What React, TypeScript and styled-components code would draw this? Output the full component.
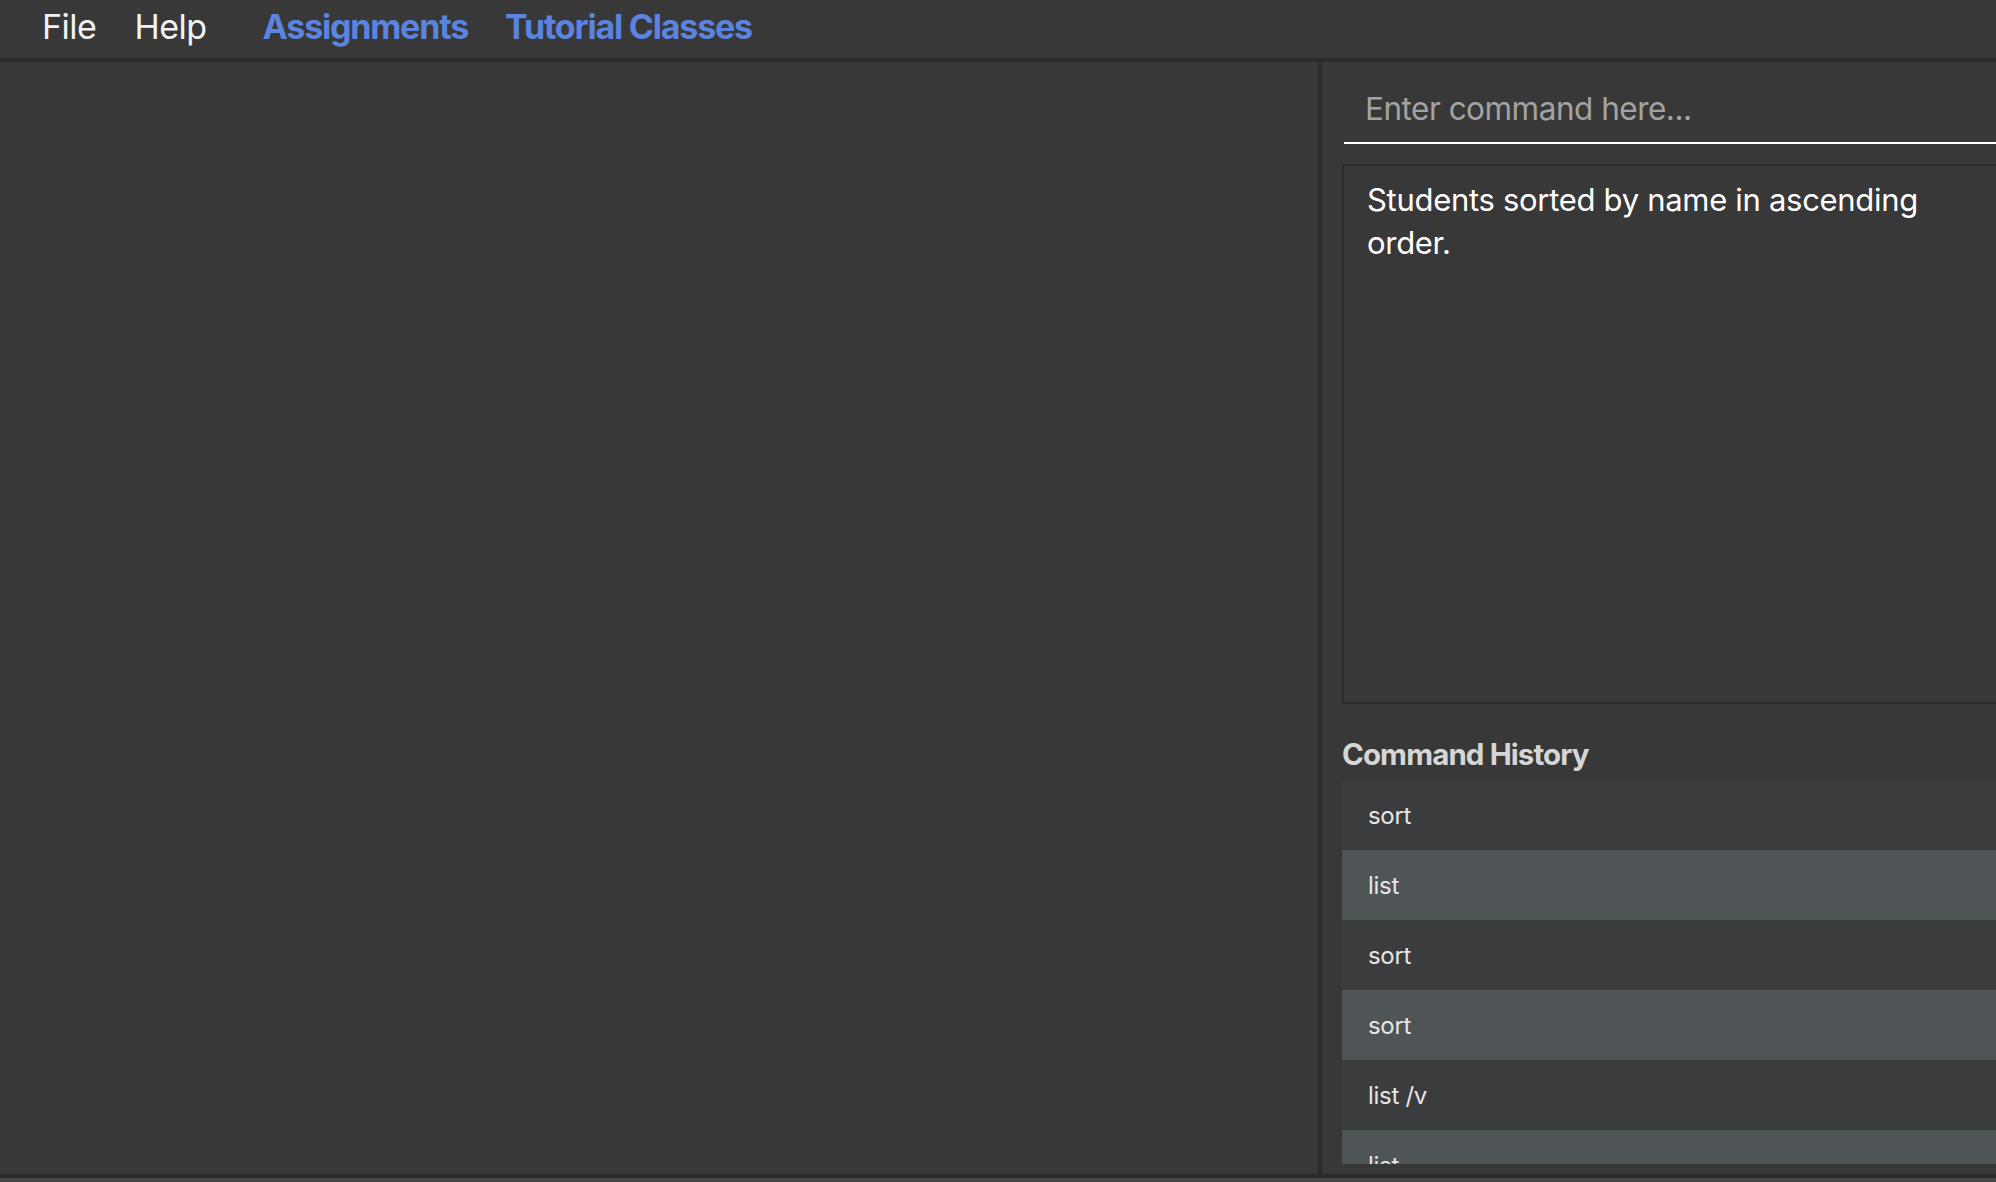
import React from "react";
import styled, { createGlobalStyle } from "styled-components";

const GlobalStyle = createGlobalStyle`
  html, body {
    margin: 0;
    padding: 0;
    background: #383838;
    font-family: Inter, "Noto Sans", "Liberation Sans", sans-serif;
  }
  * { box-sizing: border-box; }
`;

const Window = styled.div`
  width: 1996px;
  height: 1182px;
  display: flex;
  flex-direction: column;
  overflow: hidden;
  background: #383838;
`;

const MenuBar = styled.div`
  height: 62px;
  flex: 0 0 62px;
  display: flex;
  align-items: center;
  padding: 0 0 6px 42px;
  border-bottom: 4px solid #2b2b2b;
  background: #383838;
`;

const MenuItem = styled.span`
  font-size: 34px;
  color: #f2f2f2;
  letter-spacing: -0.5px;
  margin-right: 38px;
  &:nth-of-type(2) { margin-right: 56px; }
`;

const TabLink = styled.span`
  font-size: 34px;
  font-weight: 700;
  color: #5a84df;
  letter-spacing: -1.2px;
  margin-right: 37px;
`;

const Body = styled.div`
  flex: 1;
  display: flex;
  min-height: 0;
`;

const LeftPane = styled.div`
  width: 1318px;
  flex: 0 0 1318px;
  background: #383838;
`;

const Divider = styled.div`
  width: 4px;
  flex: 0 0 4px;
  background: #2b2b2b;
`;

const RightPane = styled.div`
  flex: 0 0 720px;
  display: flex;
  flex-direction: column;
  padding: 16px 0 10px 20px;
  background: #383838;
  min-height: 0;
`;

const CommandInput = styled.div`
  height: 66px;
  margin-left: 2px;
  border-bottom: 2px solid #ffffff;
  display: flex;
  align-items: center;
  padding-left: 21px;
  padding-bottom: 4px;
  font-size: 31.5px;
  color: #a3a3a3;
  letter-spacing: -0.5px;
`;

const ResultBox = styled.div`
  margin-top: 20px;
  height: 540px;
  flex: 0 0 540px;
  border: 2px solid #2b2b2b;
  border-right: none;
  padding: 12px 40px 0 23px;
  font-size: 31px;
  line-height: 43px;
  color: #ffffff;
  letter-spacing: -0.3px;
`;

const HistoryTitle = styled.div`
  margin-top: 24px;
  height: 52px;
  display: flex;
  align-items: center;
  font-size: 29.5px;
  font-weight: 700;
  color: #d6d6d6;
  letter-spacing: -0.9px;
`;

const HistoryList = styled.div`
  flex: 1;
  overflow: hidden;
  display: flex;
  flex-direction: column;
`;

const HistoryRow = styled.div<{ $alt: boolean }>`
  flex: 0 0 70px;
  height: 70px;
  display: flex;
  align-items: center;
  padding-left: 26px;
  background: ${(p) => (p.$alt ? "#4f5457" : "#3b3c3e")};
  font-size: 24px;
  color: #e6e6e6;
  letter-spacing: -0.3px;
`;

const StatusBar = styled.div`
  height: 8px;
  flex: 0 0 8px;
  border-top: 4px solid #2b2b2b;
  background: #444444;
`;

const history = ["sort", "list", "sort", "sort", "list /v", "list"];

export default function App() {
  return (
    <>
      <GlobalStyle />
      <Window>
        <MenuBar>
          <MenuItem>File</MenuItem>
          <MenuItem>Help</MenuItem>
          <TabLink>Assignments</TabLink>
          <TabLink>Tutorial Classes</TabLink>
        </MenuBar>
        <Body>
          <LeftPane />
          <Divider />
          <RightPane>
            <CommandInput>Enter command here...</CommandInput>
            <ResultBox>
              Students sorted by name in ascending
              <br />
              order.
            </ResultBox>
            <HistoryTitle>Command History</HistoryTitle>
            <HistoryList>
              {history.map((h, i) => (
                <HistoryRow key={i} $alt={i % 2 === 1}>
                  {h}
                </HistoryRow>
              ))}
            </HistoryList>
          </RightPane>
        </Body>
        <StatusBar />
      </Window>
    </>
  );
}
